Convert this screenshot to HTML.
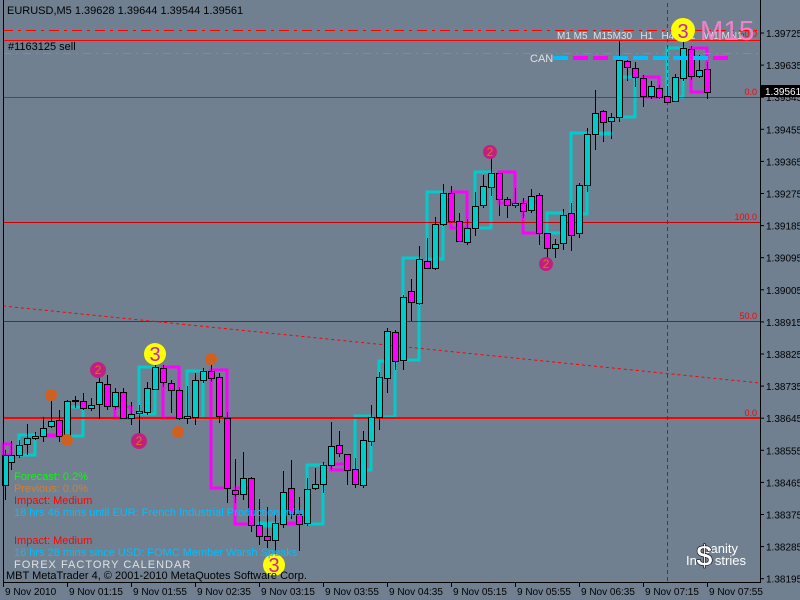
<!DOCTYPE html>
<html><head><meta charset="utf-8">
<style>
html,body{margin:0;padding:0;background:#708090;width:800px;height:600px;overflow:hidden}
svg{display:block;font-family:"Liberation Sans",sans-serif}
</style></head>
<body>
<svg id="s" width="800" height="600" xmlns="http://www.w3.org/2000/svg">
<rect width="800" height="600" fill="#708090"/>
<g id="boxes"></g>
<g id="lines">
<line x1="3" y1="30.5" x2="760" y2="30.5" stroke="#ff0000" stroke-dasharray="10,5,3,5"/>
<line x1="3" y1="40.5" x2="760" y2="40.5" stroke="#ff0000"/>
<line x1="3" y1="53.5" x2="760" y2="53.5" stroke="#40c040" stroke-dasharray="8,5,2,5"/>
<line x1="3" y1="97.5" x2="760" y2="97.5" stroke="#ff0000"/>
<line x1="3" y1="222.5" x2="760" y2="222.5" stroke="#cc0000"/>
<line x1="3" y1="321.5" x2="760" y2="321.5" stroke="#cc0000"/>
<line x1="3" y1="418" x2="760" y2="418" stroke="#ff0000" stroke-width="2"/>
<line x1="3" y1="306" x2="760" y2="383" stroke="#ff0000" stroke-dasharray="3,3"/>
<line x1="667.5" y1="3" x2="667.5" y2="582" stroke="#404040" stroke-dasharray="4,3"/>
</g>
<g id="candles"></g>
<g id="can"></g>
<g font-size="9" fill="#ff0000" text-anchor="end">
<text x="757" y="95">0.0</text><text x="757" y="220">100.0</text><text x="757" y="319">50.0</text><text x="757" y="416">0.0</text><text x="757" y="37">50.0</text>
</g>
<text x="530" y="62" font-size="11" fill="#e0e0e0">CAN</text>
<text x="557" y="39" font-size="10" fill="#e0e0e0" xml:space="preserve">M1 M5  M15M30   H1   H4   D1   W1 MN1</text>
<text x="700" y="40" font-size="28" fill="#f080c8">M15</text>
<g font-size="20" text-anchor="middle" fill="#c020c0">
<circle cx="683" cy="30" r="12" fill="#ffff00"/><text x="683" y="38">3</text>
<circle cx="155" cy="354" r="11" fill="#ffff00"/><text x="155" y="361">3</text>
<circle cx="274" cy="565" r="11" fill="#ffff00"/><text x="274" y="572">3</text>
</g>
<g font-size="12" text-anchor="middle" fill="#e07020">
<circle cx="98" cy="370" r="8" fill="#c02080"/><text x="98" y="374">2</text>
<circle cx="139" cy="441" r="8" fill="#c02080"/><text x="139" y="445">2</text>
<circle cx="490" cy="152" r="7" fill="#c02080"/><text x="490" y="156">2</text>
<circle cx="546" cy="264" r="7" fill="#c02080"/><text x="546" y="268">2</text>
</g>
<g fill="#d06020">
<circle cx="51" cy="395" r="6"/><circle cx="67" cy="440" r="6"/><circle cx="178" cy="432" r="6"/><circle cx="211" cy="359" r="6"/>
</g>
<line x1="3.5" y1="0" x2="3.5" y2="582" stroke="#000"/>
<line x1="760.5" y1="0" x2="760.5" y2="582" stroke="#000"/>
<line x1="3" y1="582.5" x2="761" y2="582.5" stroke="#000"/>
<g id="axis" font-size="10" fill="#000"></g>
<rect x="761" y="85" width="39" height="12" fill="#000"/>
<text x="765" y="95" font-size="10" fill="#fff">1.39561</text>
<text x="7" y="14" font-size="11" fill="#000">EURUSD,M5  1.39628 1.39644 1.39544 1.39561</text>
<text x="8" y="50" font-size="11" fill="#000">#1163125 sell</text>
<g font-size="11">
<text x="14" y="480" fill="#00ff00">Forecast: 0.2%</text>
<text x="14" y="492" fill="#d08030">Previous: 0.0%</text>
<text x="14" y="504" fill="#ff0000">Impact: Medium</text>
<text x="14" y="516" fill="#00bfff">18 hrs 46 mins until EUR: French Industrial Production m/m</text>
<text x="14" y="544" fill="#ff0000">Impact: Medium</text>
<text x="14" y="556" fill="#00bfff">16 hrs 28 mins since USD: FOMC Member Warsh Speaks</text>
<text x="14" y="568" fill="#e0e0e0" letter-spacing="1">FOREX FACTORY CALENDAR</text>
<text x="6" y="579" fill="#000">MBT MetaTrader 4, © 2001-2010 MetaQuotes Software Corp.</text>
</g>
<text x="704" y="553" font-size="13" fill="#fff">sanity</text>
<text x="686" y="565" font-size="13" fill="#fff" xml:space="preserve">In     stries</text>
<text x="696" y="566" font-size="30" font-weight="bold" fill="#fff" stroke="#000" stroke-width="0.6">$</text>
</svg>
<script>
var NS="http://www.w3.org/2000/svg";
function el(p,t,a){var e=document.createElementNS(NS,t);for(var k in a)e.setAttribute(k,a[k]);document.getElementById(p).appendChild(e);return e;}
var C="#00cccc",M="#ff00ff";
var d=[[5,455,485,450,500,C],[11,455,462,441,470,C],[19,445,455,440,458,C],[27,438,444,424,455,C],[35,436,438,432,440,C],[43,428,436,417,442,C],[51,421,426,395,428,C],[59,420,436,410,442,M],[67,401,436,400,442,C],[75,400,401,396,408,C],[83,401,408,393,410,M],[91,405,408,398,411,C],[99,382,404,370,419,C],[107,384,406,375,410,M],[115,392,406,388,410,C],[123,392,418,388,418,M],[131,414,418,402,425,C],[139,411,413,405,440,C],[147,388,412,382,415,C],[155,367,389,358,390,C],[163,368,382,365,387,M],[171,383,390,380,413,M],[179,390,418,387,420,M],[187,416,418,386,424,C],[195,380,417,373,425,C],[203,371,380,368,383,C],[211,371,378,358,382,M],[219,377,416,373,423,M],[227,418,488,412,503,M],[235,490,494,459,503,M],[243,478,494,452,500,C],[251,478,525,477,532,M],[259,525,536,499,545,M],[267,536,540,507,548,M],[275,523,540,515,562,C],[283,492,524,471,528,C],[291,488,514,460,519,M],[299,514,524,497,551,M],[307,489,523,478,526,C],[315,484,488,468,490,C],[323,465,484,462,493,C],[331,446,465,422,470,C],[339,445,453,431,457,M],[347,454,470,454,485,M],[355,469,484,458,488,M],[363,440,485,431,488,C],[371,417,441,405,446,C],[379,377,417,372,430,C],[387,331,378,328,393,C],[395,332,361,330,370,M],[403,297,360,295,370,C],[411,291,302,279,321,M],[419,259,303,246,305,C],[427,261,268,238,268,M],[435,224,268,217,270,C],[443,193,224,184,226,C],[451,193,221,186,223,M],[459,221,241,213,241,M],[467,228,242,219,245,C],[475,206,228,192,236,C],[483,186,205,175,208,C],[491,173,187,152,196,C],[499,173,199,173,216,M],[507,199,205,197,218,M],[515,203,205,188,208,C],[523,203,211,198,218,M],[531,196,210,189,213,C],[539,195,233,193,245,M],[547,233,248,233,260,M],[555,244,248,239,258,C],[563,215,243,209,250,C],[571,213,235,203,251,M],[579,185,233,183,238,C],[587,134,185,128,192,C],[595,113,134,90,150,C],[603,111,122,110,142,M],[611,117,121,113,139,C],[619,60,117,41,122,C],[627,61,67,56,81,M],[635,68,77,62,87,M],[643,78,96,75,107,M],[651,86,96,81,99,C],[659,88,97,85,99,M],[667,96,102,86,102,M],[675,77,101,74,102,C],[683,48,78,33,81,C],[691,49,76,46,80,M],[699,70,76,55,78,C],[707,69,92,62,99,M]];
d.forEach(function(c){
 el("candles","line",{x1:c[0]+.5,y1:c[3],x2:c[0]+.5,y2:c[4],stroke:"#000"});
 el("candles","rect",{x:c[0]-2.5,y:c[1]+.5,width:6,height:Math.max(1,c[2]-c[1]),fill:c[5],stroke:"#000"});
});
var b=[[3,444,11,455,M],[19,435,35,455,C],[43,435,59,436,M],[67,407,83,436,C],[115,407,131,418,M],[139,367,155,414,C],[163,367,179,418,M],[187,371,203,418,C],[211,370,227,488,M],[235,488,251,524,M],[259,523,275,526,C],[283,523,299,524,M],[307,465,323,524,C],[331,464,347,470,M],[355,416,371,470,C],[379,361,395,417,C],[403,258,419,360,C],[427,192,443,259,C],[451,192,467,228,M],[475,172,491,228,C],[499,172,515,203,M],[523,202,539,233,M],[547,213,563,233,C],[571,133,587,214,C],[595,133,611,133,C],[619,77,635,117,C],[643,77,659,97,M],[667,48,683,97,C],[691,48,707,92,M]];
b.forEach(function(r){el("boxes","rect",{x:r[0],y:r[1],width:r[2]-r[0],height:Math.max(1,r[3]-r[1]),fill:"none",stroke:r[4],"stroke-width":3});});
var cc=[C,M,M,C,C,C,C,C,M];
cc.forEach(function(c,i){el("can","rect",{x:553+i*20,y:56,width:15,height:4,fill:c==C?"#00bfff":M});});
var p=["1.39725","1.39635","1.39545","1.39455","1.39365","1.39275","1.39185","1.39095","1.39005","1.38915","1.38825","1.38735","1.38645","1.38555","1.38465","1.38375","1.38285","1.38195"];
p.forEach(function(t,i){var y=33+i*32.1;el("axis","line",{x1:760,y1:y,x2:764,y2:y,stroke:"#000"});var e=el("axis","text",{x:766,y:y+4});e.textContent=t;});
var tl=["9 Nov 2010","9 Nov 01:15","9 Nov 01:55","9 Nov 02:35","9 Nov 03:15","9 Nov 03:55","9 Nov 04:35","9 Nov 05:15","9 Nov 05:55","9 Nov 06:35","9 Nov 07:15","9 Nov 07:55"];
tl.forEach(function(t,i){var x=3+i*64;el("axis","line",{x1:x+.5,y1:582,x2:x+.5,y2:587,stroke:"#000"});var e=el("axis","text",{x:x+2,y:595});e.textContent=t;});
</script>
</body></html>
